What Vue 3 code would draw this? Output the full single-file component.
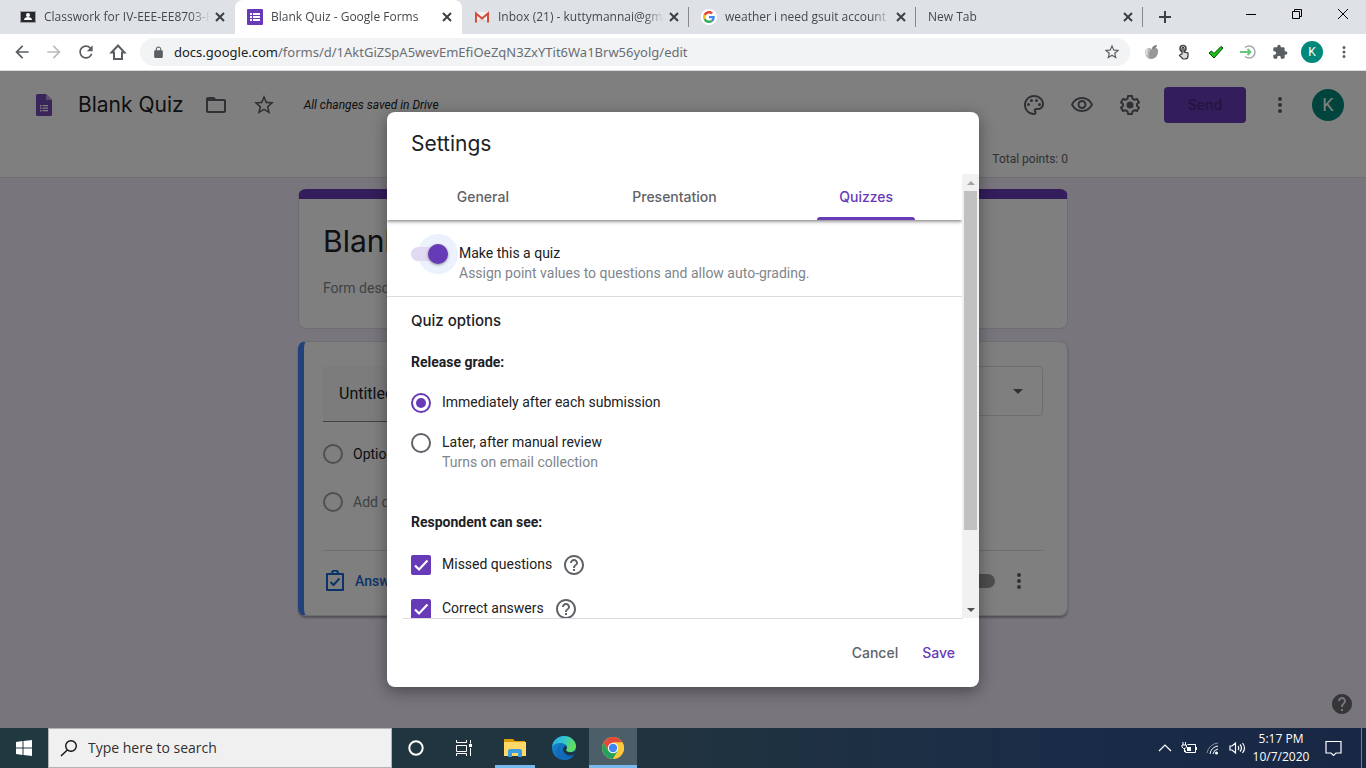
<script setup>
import { h, ref } from 'vue'

const paths = {
  back: 'M20 11H7.83l5.59-5.59L12 4l-8 8 8 8 1.41-1.41L7.83 13H20v-2z',
  forward: 'M12 4l-1.41 1.41L16.17 11H4v2h12.17l-5.58 5.59L12 20l8-8z',
  reload: 'M17.65 6.35C16.2 4.9 14.21 4 12 4c-4.42 0-7.99 3.58-7.99 8s3.57 8 7.99 8c3.73 0 6.84-2.55 7.73-6h-2.08c-.82 2.33-3.04 4-5.65 4-3.31 0-6-2.69-6-6s2.69-6 6-6c1.66 0 3.14.69 4.22 1.78L13 11h7V4l-2.35 2.35z',
  lock: 'M18 8h-1V6c0-2.76-2.24-5-5-5S7 3.24 7 6v2H6c-1.1 0-2 .9-2 2v10c0 1.1.9 2 2 2h12c1.1 0 2-.9 2-2V10c0-1.1-.9-2-2-2zM9 6c0-1.71 1.39-3.1 3.1-3.1s3.1 1.39 3.1 3.1v2H9z',
  star: 'M22 9.24l-7.19-.62L12 2 9.19 8.63 2 9.24l5.46 4.73L5.82 21 12 17.27 18.18 21l-1.63-7.03L22 9.24zM12 15.4l-3.76 2.27 1-4.28-3.32-2.88 4.38-.38L12 6.1l1.71 4.04 4.38.38-3.32 2.88 1 4.28L12 15.4z',
  puzzle: 'M20.5 11H19V7c0-1.1-.9-2-2-2h-4V3.5C13 2.12 11.88 1 10.5 1S8 2.12 8 3.5V5H4c-1.1 0-1.99.9-1.99 2v3.8H3.5c1.49 0 2.7 1.21 2.7 2.7s-1.21 2.7-2.7 2.7H2V20c0 1.1.9 2 2 2h3.8v-1.5c0-1.49 1.21-2.7 2.7-2.7 1.49 0 2.7 1.21 2.7 2.7V22H17c1.1 0 2-.9 2-2v-4h1.5c1.38 0 2.5-1.12 2.5-2.5S21.88 11 20.5 11z',
  more: 'M12 8a2 2 0 1 0 0-4 2 2 0 0 0 0 4zm0 2a2 2 0 1 0 0 4 2 2 0 0 0 0-4zm0 6a2 2 0 1 0 0 4 2 2 0 0 0 0-4z',
  folder: 'M20 6h-8l-2-2H4c-1.1 0-1.99.9-1.99 2L2 18c0 1.1.9 2 2 2h16c1.1 0 2-.9 2-2V8c0-1.1-.9-2-2-2zm0 12H4V8h16v10z',
  palette: 'M12 22C6.49 22 2 17.51 2 12S6.49 2 12 2s10 4.04 10 9c0 3.31-2.69 6-6 6h-1.77c-.28 0-.5.22-.5.5 0 .12.05.23.13.33.41.47.64 1.06.64 1.67A2.5 2.5 0 0 1 12 22zm0-18c-4.41 0-8 3.59-8 8s3.59 8 8 8c.28 0 .5-.22.5-.5a.54.54 0 0 0-.14-.35c-.41-.46-.63-1.05-.63-1.65a2.5 2.5 0 0 1 2.5-2.5H16c2.21 0 4-1.79 4-4 0-3.86-3.59-7-8-7zM5 11.5a1.5 1.5 0 1 0 3 0 1.5 1.5 0 0 0-3 0zM8 7.5a1.5 1.5 0 1 0 3 0 1.5 1.5 0 0 0-3 0zM13 7.5a1.5 1.5 0 1 0 3 0 1.5 1.5 0 0 0-3 0zM16 11.5a1.5 1.5 0 1 0 3 0 1.5 1.5 0 0 0-3 0z',
  eye: 'M12 6c3.79 0 7.17 2.13 8.82 5.5C19.17 14.87 15.79 17 12 17s-7.17-2.13-8.82-5.5C4.83 8.13 8.21 6 12 6m0-2C7 4 2.73 7.11 1 11.5 2.73 15.89 7 19 12 19s9.27-3.11 11-7.5C21.27 7.11 17 4 12 4zm0 5c1.38 0 2.5 1.12 2.5 2.5S13.38 14 12 14s-2.5-1.12-2.5-2.5S10.62 9 12 9m0-2c-2.48 0-4.5 2.02-4.5 4.5S9.52 16 12 16s4.5-2.02 4.5-4.5S14.48 7 12 7z',
  help: 'M11 18h2v-2h-2v2zm1-16C6.48 2 2 6.48 2 12s4.48 10 10 10 10-4.48 10-10S17.52 2 12 2zm0 18c-4.41 0-8-3.59-8-8s3.59-8 8-8 8 3.59 8 8-3.59 8-8 8zm0-14c-2.21 0-4 1.79-4 4h2c0-1.1.9-2 2-2s2 .9 2 2c0 2-3 1.75-3 5h2c0-2.25 3-2.5 3-5 0-2.21-1.79-4-4-4z',
  helpFilled: 'M12 2C6.48 2 2 6.48 2 12s4.48 10 10 10 10-4.48 10-10S17.52 2 12 2zm1 17h-2v-2h2v2zm2.07-7.75l-.9.92C13.45 12.9 13 13.5 13 15h-2v-.5c0-1.1.45-2.1 1.17-2.83l1.24-1.26c.37-.36.59-.86.59-1.41 0-1.1-.9-2-2-2s-2 .9-2 2H8c0-2.21 1.79-4 4-4s4 1.79 4 4c0 .88-.36 1.68-.93 2.25z'
}

const Icon = (props) =>
  h('svg', { viewBox: '0 0 24 24', width: props.size || 24, height: props.size || 24, fill: 'currentColor', 'aria-hidden': 'true' }, [
    h('path', { d: paths[props.name] })
  ])
Icon.props = ['name', 'size']

const tabs = [
  { icon: 'classroom', title: 'Classwork for IV-EEE-EE8703-R' },
  { icon: 'forms', title: 'Blank Quiz - Google Forms', active: true },
  { icon: 'gmail', title: 'Inbox (21) - kuttymannai@gma' },
  { icon: 'google', title: 'weather i need gsuit account fo' },
  { icon: '', title: 'New Tab' }
]

const sections = ['General', 'Presentation', 'Quizzes']
const section = ref('Quizzes')
const isQuiz = ref(true)
const release = ref('now')
const visible = ref([
  { id: 'missed', label: 'Missed questions', on: true },
  { id: 'correct', label: 'Correct answers', on: true }
])
const formTitle = ref('Blank Quiz')
const question = ref('Untitled Question')
</script>

<template>
  <div class="screen">
    <header class="tabstrip">
      <nav class="tabs">
        <div v-for="t in tabs" :key="t.title" class="tab" :class="{ active: t.active }">
          <svg v-if="t.icon === 'classroom'" width="16" height="16" viewBox="0 0 16 16">
            <path d="M0 2h16v12H0z" fill="#9aa0a6" /><path d="M1 3h14v10H1z" fill="#27292d" />
            <circle cx="8" cy="6" r="2" fill="#fff" /><path d="M4 11c0-2 2-3 4-3s4 1 4 3z" fill="#fff" />
          </svg>
          <svg v-else-if="t.icon === 'forms'" width="16" height="16" viewBox="0 0 16 16">
            <rect width="16" height="16" rx="1" fill="#673ab7" />
            <path d="M3 4h2v2H3zM3 7h2v2H3zM3 10h2v2H3zM6 4h7v2H6zM6 7h7v2H6zM6 10h7v2H6z" fill="#fff" />
          </svg>
          <svg v-else-if="t.icon === 'gmail'" width="16" height="16" viewBox="0 0 16 16">
            <path d="M2 3h12v10H2z" fill="#f2f2f2" /><path d="M2 13l6-5 6 5z" fill="#dcdcdc" />
            <path d="M2 13.500V4.500l6 5 6-5v9" fill="none" stroke="#d54b3d" stroke-width="2" />
          </svg>
          <svg v-else-if="t.icon === 'google'" width="16" height="16" viewBox="0 0 16 16">
            <circle cx="8" cy="8" r="8" fill="#fff" />
            <g transform="translate(2 2) scale(.25)">
              <path fill="#EA4335" d="M24 9.5c3.54 0 6.71 1.22 9.21 3.6l6.85-6.85C35.9 2.38 30.47 0 24 0 14.62 0 6.51 5.38 2.56 13.22l7.98 6.19C12.43 13.72 17.74 9.5 24 9.5z" />
              <path fill="#4285F4" d="M46.98 24.55c0-1.57-.15-3.09-.38-4.55H24v9.02h12.94c-.58 2.96-2.26 5.48-4.78 7.18l7.73 6c4.51-4.18 7.09-10.36 7.09-17.65z" />
              <path fill="#FBBC05" d="M10.53 28.59c-.48-1.45-.76-2.99-.76-4.59s.27-3.14.76-4.59l-7.98-6.19C.92 16.46 0 20.12 0 24c0 3.88.92 7.54 2.56 10.78l7.97-6.19z" />
              <path fill="#34A853" d="M24 48c6.48 0 11.93-2.13 15.89-5.81l-7.73-6c-2.15 1.45-4.92 2.3-8.16 2.3-6.26 0-11.57-4.22-13.47-9.91l-7.98 6.19C6.51 42.62 14.62 48 24 48z" />
            </g>
          </svg>
          <span class="tab-title">{{ t.title }}</span>
          <button class="icon-btn tab-close" aria-label="Close tab">
            <svg width="10" height="10" viewBox="0 0 10 10"><path d="M1 1l8 8M9 1L1 9" stroke="#3c4043" stroke-width="2" /></svg>
          </button>
        </div>
      </nav>
      <button class="icon-btn new-tab" aria-label="New tab">
        <svg width="14" height="14" viewBox="0 0 14 14"><path d="M7 1v12M1 7h12" stroke="#3c4043" stroke-width="2" /></svg>
      </button>
      <div class="window-controls">
        <button class="icon-btn" aria-label="Minimize"><svg width="12" height="12" viewBox="0 0 12 12"><path d="M1 6.5h10" stroke="#000" /></svg></button>
        <button class="icon-btn" aria-label="Restore"><svg width="12" height="12" viewBox="0 0 12 12"><path d="M1.500 3.500h7v7h-7zM3.500 3.500v-2h7v7h-2" fill="none" stroke="#000" /></svg></button>
        <button class="icon-btn" aria-label="Close"><svg width="12" height="12" viewBox="0 0 12 12"><path d="M1 1l10 10M11 1L1 11" stroke="#000" /></svg></button>
      </div>
    </header>

    <div class="toolbar">
      <button class="icon-btn tool" aria-label="Back"><Icon name="back" :size="20" /></button>
      <button class="icon-btn tool faded" aria-label="Forward"><Icon name="forward" :size="20" /></button>
      <button class="icon-btn tool" aria-label="Reload"><Icon name="reload" :size="20" /></button>
      <button class="icon-btn tool" aria-label="Home">
        <svg width="18" height="18" viewBox="0 0 18 18"><path d="M2.500 9.500L9 2.500l6.500 7H13V16H5V9.500z" fill="none" stroke="currentColor" stroke-width="2" /></svg>
      </button>
      <div class="omnibox">
        <Icon name="lock" :size="13" />
        <div class="url" role="textbox" aria-label="Address"><span class="host">docs.google.com</span>/forms/d/1AktGiZSpA5wevEmEfiOeZqN3ZxYTit6Wa1Brw56yolg/edit</div>
        <button class="icon-btn" aria-label="Bookmark this page"><Icon name="star" :size="18" /></button>
      </div>
      <div class="extensions">
        <button class="icon-btn tool" aria-label="Apple extension">
          <svg width="16" height="16" viewBox="0 0 16 16"><path d="M8 5C5 3 1 4 1 8c0 4 3 7 5 7 5 0 8-3 8-8 0-3-3-4-6-2z" fill="#b4b4b4" /><path d="M8 5C6 6 4 9 6 15c5 0 8-3 8-8 0-3-3-4-6-2z" fill="#989898" /><path d="M8 5c0-3 3-4 5-4 0 2-2 4-5 4z" fill="#808080" /><path d="M4 5c-2 1-2 4-1 6" stroke="#e0e0e0" fill="none" stroke-width="2" /></svg>
        </button>
        <button class="icon-btn tool" aria-label="Tap extension">
          <svg width="16" height="16" viewBox="0 0 16 16"><circle cx="7" cy="4.500" r="3" fill="none" stroke="#444" stroke-width="1.500" /><path d="M6 10V4.500c0-1.500 2-1.500 2 0V8l4 1v3c0 2-1 3-3 3H7L3.500 11.500l1-1z" fill="#ddd" stroke="#333" stroke-width="1.200" /></svg>
        </button>
        <button class="icon-btn tool" aria-label="Check extension">
          <svg width="16" height="16" viewBox="0 0 16 16"><path d="M1 9l2.500-2L6 9.500 13 2.500l2 1.500-9 10z" fill="#15c815" stroke="#063d06" /></svg>
        </button>
        <button class="icon-btn tool" aria-label="Sign-in extension">
          <svg width="16" height="16" viewBox="0 0 16 16" fill="none"><path d="M5 3.500a6 6 0 1 1 0 9" stroke="#a5a9ad" stroke-width="1.500" /><path d="M0 8h10M7.500 5l3 3-3 3" stroke="#69c57c" stroke-width="1.800" /></svg>
        </button>
        <button class="icon-btn tool" aria-label="Extensions"><Icon name="puzzle" :size="16" /></button>
        <button class="icon-btn tool" aria-label="Profile"><span class="avatar small">K</span></button>
        <button class="icon-btn tool" aria-label="Chrome menu"><Icon name="more" :size="18" /></button>
      </div>
    </div>

    <main class="page">
      <div class="app-header">
        <div class="header-row">
          <svg width="16" height="22" viewBox="0 0 16 22">
            <path d="M1.500 0H10l6 6v14.500a1.500 1.500 0 0 1-1.500 1.500h-13A1.500 1.500 0 0 1 0 20.500v-19A1.500 1.500 0 0 1 1.500 0z" fill="#7248b9" /><path d="M10 0l6 6h-6z" fill="#b39ddb" />
            <path d="M4 11h1.500v1.500H4zM4 13.500h1.500V15H4zM4 16h1.500v1.500H4zM6.500 11H12v1.200H6.500zM6.500 13.500H12v1.200H6.500zM6.500 16H12v1.200H6.500z" fill="#fff" />
          </svg>
          <h1 class="doc-title">Blank Quiz</h1>
          <button class="icon-btn header-icon" aria-label="Move to folder"><Icon name="folder" /></button>
          <button class="icon-btn header-icon" aria-label="Star"><Icon name="star" /></button>
          <span class="saved">All changes saved in Drive</span>
          <div class="header-actions">
            <button class="icon-btn header-icon" aria-label="Customize theme"><Icon name="palette" /></button>
            <button class="icon-btn header-icon" aria-label="Preview"><Icon name="eye" /></button>
            <button class="icon-btn header-icon" aria-label="Settings">
              <svg width="24" height="24" viewBox="0 0 24 24">
                <path d="M10 3h4l.5 2.700 2 1.100L19 6l2 3.400-2 1.700v1.800l2 1.700-2 3.400-2.500-.8-2 1.100L14 21h-4l-.5-2.700-2-1.100L5 18l-2-3.400 2-1.700v-1.800L3 9.400 5 6l2.500.8 2-1.100z" fill="none" stroke="currentColor" stroke-width="2" stroke-linejoin="round" /><circle cx="12" cy="12" r="3.500" fill="currentColor" />
              </svg>
            </button>
            <button class="send">Send</button>
            <button class="icon-btn header-icon narrow" aria-label="More"><Icon name="more" /></button>
            <button class="icon-btn" aria-label="Account"><span class="avatar">K</span></button>
          </div>
        </div>
        <div class="column points">Total points: 0</div>
      </div>

      <div class="column cards">
        <section class="card title-card">
          <input v-model="formTitle" class="form-title" aria-label="Form title" />
          <input class="form-desc" placeholder="Form description" aria-label="Form description" />
        </section>
        <section class="card question-card">
          <div class="question-top">
            <input v-model="question" class="question-input" aria-label="Question" />
            <button class="type-picker" aria-label="Question type"><span class="caret"></span></button>
          </div>
          <div class="option"><span class="ring"></span><span>Option 1</span></div>
          <div class="option muted"><span class="ring"></span><span>Add option</span></div>
          <div class="question-foot">
            <button class="answer-key">
              <svg width="20" height="22" viewBox="0 0 20 22" fill="none" stroke="currentColor" stroke-width="2"><path d="M2 4h16v16H2z" stroke-linejoin="round" /><path d="M5.500 12l3 3 6-6.500" /><path d="M7 3.500a3 3 0 0 1 6 0" /></svg>
              Answer key
            </button>
            <div class="foot-right">
              <span class="off-switch"></span>
              <button class="icon-btn" aria-label="More options"><Icon name="more" /></button>
            </div>
          </div>
        </section>
      </div>

      <div class="scrim"></div>
      <button class="icon-btn help-fab" aria-label="Help"><Icon name="helpFilled" /></button>

      <div class="dialog-layer">
        <div class="dialog" role="dialog" aria-labelledby="dlg-title">
          <h2 id="dlg-title" class="dialog-title">Settings</h2>
          <div class="dialog-main">
            <div class="dialog-body">
              <div class="section-tabs" role="tablist">
                <button v-for="s in sections" :key="s" class="section-tab" :class="{ current: section === s }" role="tab" :aria-selected="section === s" @click="section = s">{{ s }}</button>
              </div>
              <div class="quiz-row">
                <input id="is-quiz" v-model="isQuiz" class="switch" type="checkbox" />
                <label for="is-quiz">Make this a quiz<small>Assign point values to questions and allow auto-grading.</small></label>
              </div>
              <div class="options">
                <h3 class="options-title">Quiz options</h3>
                <h4 class="group-title">Release grade:</h4>
                <div class="choice">
                  <input id="rel-now" v-model="release" class="radio" type="radio" value="now" name="release" />
                  <label for="rel-now">Immediately after each submission</label>
                </div>
                <div class="choice">
                  <input id="rel-later" v-model="release" class="radio" type="radio" value="later" name="release" />
                  <label for="rel-later">Later, after manual review<small>Turns on email collection</small></label>
                </div>
                <h4 class="group-title respondent">Respondent can see:</h4>
                <div v-for="v in visible" :key="v.id" class="choice check-choice">
                  <span class="check-wrap">
                    <input :id="v.id" v-model="v.on" class="check" type="checkbox" />
                    <svg v-if="v.on" width="20" height="20" viewBox="0 0 20 20"><path d="M4 10.500l4 4 8.500-9" fill="none" stroke="#fff" stroke-width="2.200" /></svg>
                  </span>
                  <label :for="v.id">{{ v.label }}</label>
                  <button class="icon-btn help" :aria-label="'About ' + v.label"><Icon name="help" /></button>
                </div>
              </div>
            </div>
            <div class="scrollbar" aria-hidden="true">
              <span class="arrow up"></span>
              <span class="thumb"></span>
              <span class="arrow down"></span>
            </div>
          </div>
          <div class="dialog-foot">
            <button class="text-btn">Cancel</button>
            <button class="text-btn primary">Save</button>
          </div>
        </div>
      </div>
    </main>

    <footer class="taskbar">
      <button class="icon-btn start" aria-label="Start">
        <svg width="16" height="16" viewBox="0 0 16 16" fill="#fff"><path d="M0 2l6.500-1v6.500H0zM7.500.9L16 0v7.500H7.500zM0 8.500h6.500V15L0 14zM7.500 8.500H16V16l-8.500-.9z" /></svg>
      </button>
      <label class="search">
        <svg width="18" height="18" viewBox="0 0 18 18" fill="none" stroke="#111" stroke-width="1.400"><circle cx="11" cy="7" r="5.300" /><path d="M7.300 11L1 17" /></svg>
        <input placeholder="Type here to search" aria-label="Search" />
      </label>
      <button class="icon-btn app" aria-label="Cortana"><svg width="16" height="16" viewBox="0 0 16 16"><circle cx="8" cy="8" r="6.700" fill="none" stroke="#fff" stroke-width="2" /></svg></button>
      <button class="icon-btn app" aria-label="Task view">
        <svg width="18" height="16" viewBox="0 0 18 16" fill="none" stroke="#fff"><path d="M1.500 0v2.500h10V0M1.500 5.500h10v6h-10zM1.500 16v-2.500h10V16M15.500 0v3.500M15.500 8v8" /><path d="M14 4h3v3h-3z" fill="#fff" stroke="none" /></svg>
      </button>
      <button class="icon-btn app running" aria-label="File Explorer">
        <svg width="22" height="18" viewBox="0 0 22 18"><path d="M0 0h9l2 2h10v5H0z" fill="#dd9d08" /><path d="M0 3h22v14H0z" fill="#ffd868" /><path d="M4 18v-6c0-1 1-2 2-2h10c1 0 2 1 2 2v6h-4v-4H8v4z" fill="#3d9be0" /></svg>
      </button>
      <button class="icon-btn app" aria-label="Edge">
        <svg width="24" height="24" viewBox="0 0 24 24">
          <defs>
            <linearGradient id="edge-top" x1="0" y1="0" x2="1" y2=".4"><stop offset="0" stop-color="#2ba6e4" /><stop offset=".5" stop-color="#33c5d0" /><stop offset="1" stop-color="#63df5c" /></linearGradient>
            <linearGradient id="edge-low" x1="0" y1="0" x2="1" y2="1"><stop offset="0" stop-color="#168bd5" /><stop offset="1" stop-color="#0c56a5" /></linearGradient>
          </defs>
          <circle cx="12" cy="12" r="12" fill="url(#edge-low)" />
          <path d="M0 11C1 4 6 0 12 0c7 0 12 5 12 10 0 4-3 6-6 6-3 0-4-1-4-2 0-1 1-1 1-3 0-2-3-4-7-4-4 0-7 2-8 4z" fill="url(#edge-top)" />
          <path d="M9 9c-3 4-1 10 4 12 4 1 7 0 9-3-1 4-5 6-10 6-5-1-8-5-7-9 0-3 2-5 4-6z" fill="#1269b8" />
          <path d="M14 14c1 3 5 3 10 1-1 2-2 3-3 4-5 1-9-1-10-5 0-2 1-4 3-4 1 1 1 2 0 4z" fill="#20323d" />
        </svg>
      </button>
      <button class="icon-btn app current" aria-label="Chrome">
        <svg width="22" height="22" viewBox="0 0 22 22">
          <circle cx="11" cy="11" r="11" fill="#fbc93b" /><path d="M1.500 5.500A11 11 0 0 1 20.500 5.500H11l-4.800 8.200z" fill="#e24a3b" /><path d="M1.500 5.500A11 11 0 0 0 11 22l4.800-8.300H6.200z" fill="#24a15c" /><path d="M20.500 5.500H11l5 8.200L11 22A11 11 0 0 0 20.500 5.500z" fill="#fbc93b" />
          <circle cx="11" cy="11" r="5.200" fill="#fff" /><circle cx="11" cy="11" r="4.200" fill="#4285f4" />
        </svg>
      </button>
      <div class="tray">
        <button class="icon-btn tray-icon" aria-label="Show hidden icons"><svg width="14" height="14" viewBox="0 0 14 14"><path d="M1 10l6-6 6 6" fill="none" stroke="#fff" stroke-width="1.200" /></svg></button>
        <button class="icon-btn tray-icon" aria-label="Battery">
          <svg width="17" height="14" viewBox="0 0 17 14"><path d="M6.500 3.500h8v8h-10v-2M15.500 6v3M2 1v3M4.500 1v3M1 4h4.500v2L4 7.500H2.500L1 6zM3.500 8v3" fill="none" stroke="#fff" /><path d="M6 6h4v4H6z" fill="#fff" /></svg>
        </button>
        <button class="icon-btn tray-icon" aria-label="Wi-Fi">
          <svg width="14" height="14" viewBox="0 0 14 14" fill="none"><path d="M1 12A12 12 0 0 1 12 2" stroke="#8292a0" /><path d="M4 13a9 9 0 0 1 8-8M7 13a6 6 0 0 1 5-5" stroke="#fff" /><circle cx="10.500" cy="12" r="1.500" fill="#fff" /></svg>
        </button>
        <button class="icon-btn tray-icon" aria-label="Volume">
          <svg width="17" height="14" viewBox="0 0 17 14" fill="none" stroke="#fff" stroke-width="1.200"><path d="M1 5h2l3.500-3v10L3 9H1zM9 5q1.500 2 0 4M11 3.500q3 3.500 0 7M13.500 2q4 5 0 10" /></svg>
        </button>
        <div class="clock"><span>5:17 PM</span><span>10/7/2020</span></div>
        <button class="icon-btn notify" aria-label="Notifications">
          <svg width="17" height="17" viewBox="0 0 17 17"><path d="M1 1.500h15v11.500h-5L8.500 15.500 6 13H1z" fill="none" stroke="#fff" stroke-width="1.200" /></svg>
        </button>
        <span class="desktop-edge"></span>
      </div>
    </footer>
  </div>
</template>

<style>
html, body { margin: 0; }
</style>

<style scoped>
.screen { display: flex; flex-direction: column; height: 100vh; overflow: hidden; font-family: Roboto, "Liberation Sans", sans-serif; font-size: 14px; line-height: 20px; color: #202124; }
.screen * { box-sizing: border-box; }
button, input { font: inherit; color: inherit; }
button { border: 0; background: none; padding: 0; cursor: pointer; }
input { outline: 0; border: 0; background: none; padding: 0; margin: 0; min-width: 0; }
svg { display: block; flex: none; }
h1, h2, h3, h4 { margin: 0; font-weight: 400; }
.icon-btn { display: flex; align-items: center; justify-content: center; flex: none; }

.tabstrip { display: flex; height: 34px; flex: none; background: #dee1e6; padding-left: 8px; font-family: "Open Sans", "Noto Sans", sans-serif; font-size: 12px; }
.tabs { display: flex; flex: 0 1 1135px; min-width: 0; }
.tab { display: flex; align-items: center; flex: 1; min-width: 0; gap: 8px; padding: 0 7px 0 12px; color: #45494d; position: relative; }
.tab:nth-child(n + 3)::after { content: ""; position: absolute; right: 0; top: 7px; height: 20px; width: 1px; background: #85888d; }
.tab.active { background: #fff; border-radius: 8px 8px 0 0; }
.tab-title { flex: 1; min-width: 0; overflow: hidden; white-space: nowrap; mask-image: linear-gradient(to right, #000 calc(100% - 20px), transparent); }
.tab-close { width: 16px; height: 16px; margin-left: -6px; }
.new-tab { width: 44px; }
.window-controls { display: flex; margin-left: auto; height: 28px; }
.window-controls .icon-btn { width: 46px; }

.toolbar { display: flex; align-items: center; height: 37px; flex: none; background: #fff; border-bottom: 1px solid #d7dade; padding: 0 6px; color: #5a5e63; }
.tool { width: 32px; height: 32px; }
.faded { color: #babcbe; }
.omnibox { flex: 1; display: flex; align-items: center; gap: 9px; height: 28px; margin-left: 6px; padding: 0 9px 0 12px; border-radius: 14px; background: #f1f3f4; min-width: 0; }
.url { flex: 1; min-width: 0; overflow: hidden; white-space: nowrap; font-family: "Noto Sans", "Open Sans", sans-serif; font-size: 13px; color: #6a6e73; }
.host { color: #202124; }
.extensions { display: flex; margin-left: 6px; }
.avatar { display: flex; align-items: center; justify-content: center; width: 32px; height: 32px; border-radius: 50%; background: #00897b; color: #fff; font-size: 18px; }
.avatar.small { width: 22px; height: 22px; font-size: 12px; }

.page { position: relative; flex: 1; min-height: 0; overflow: hidden; background: #f0ebf8; }
.app-header { height: 107px; background: #fff; border-bottom: 1px solid #dadce0; color: #5f6368; }
.header-row { display: flex; align-items: center; height: 68px; padding: 0 22px 0 36px; }
.doc-title { margin: 0 8px 0 26px; font-family: Inter, Roboto, sans-serif; font-size: 21px; line-height: 28px; color: #202124; }
.header-icon { width: 48px; height: 48px; }
.header-icon.narrow { width: 36px; margin: 0 14px 0 16px; }
.saved { margin-left: 16px; font-size: 12px; font-style: italic; color: #202124; }
.header-actions { display: flex; align-items: center; margin-left: auto; }
.send { width: 82px; height: 36px; margin-left: 10px; border-radius: 4px; background: #673ab7; color: #46277f; font-family: Inter, Roboto, sans-serif; font-weight: 500; }
.column { width: 770px; max-width: 100%; margin: 0 auto; }
.points { text-align: right; font-size: 12px; line-height: 40px; }

.cards { padding-top: 11px; display: flex; flex-direction: column; gap: 12px; }
.card { background: #fff; border: 1px solid #dadce0; border-radius: 8px; display: flex; flex-direction: column; }
.title-card { border-top: 10px solid #673ab7; padding: 20px 24px; height: 140px; }
.form-title { font-family: Inter, Roboto, sans-serif; font-size: 30px; line-height: 44px; height: 44px; }
.form-desc { margin-top: 15px; height: 20px; }
.form-desc::placeholder { color: #80868b; opacity: 1; }
.question-card { height: 275px; padding: 24px 24px 0 19px; border-left: 6px solid #4285f4; box-shadow: 0 2px 2px rgba(0, 0, 0, .3); }
.question-top { display: flex; align-items: flex-start; justify-content: space-between; height: 56px; }
.question-input { width: 440px; height: 56px; padding: 0 16px; background: #f8f9fa; border-bottom: 1px solid #80868b; font-size: 16px; }
.type-picker { display: flex; align-items: center; justify-content: flex-end; width: 240px; height: 50px; padding: 0 19px; border: 1px solid #dadce0; border-radius: 4px; }
.caret { border: 5px solid transparent; border-top-color: #5f6368; border-bottom: 0; }
.option { display: flex; align-items: center; gap: 10px; height: 48px; }
.question-top + .option { margin-top: 8px; }
.option.muted { color: #80868b; }
.ring { width: 20px; height: 20px; border: 2px solid #9aa0a6; border-radius: 50%; }
.question-foot { display: flex; align-items: center; justify-content: space-between; margin-top: 24px; height: 60px; border-top: 1px solid #dadce0; }
.answer-key { display: flex; align-items: center; gap: 10px; padding-left: 2px; font-weight: 500; color: #1967d2; }
.foot-right { display: flex; align-items: center; gap: 12px; padding-right: 12px; color: #5f6368; }
.off-switch { width: 36px; height: 14px; border-radius: 7px; background: #9a9a9a; }

.scrim { position: absolute; inset: 0; background: rgba(0, 0, 0, .5); }
.help-fab { position: absolute; right: 12px; bottom: 12px; color: #363638; }
.dialog-layer { position: absolute; inset: 0; display: flex; align-items: center; justify-content: center; }
.dialog { width: 592px; max-width: 100%; background: #fff; border-radius: 8px; overflow: hidden; box-shadow: 0 4px 16px rgba(0, 0, 0, .4); }
.dialog-title { padding: 18px 24px 16px; font-family: Inter, Roboto, sans-serif; font-size: 21px; line-height: 28px; }
.dialog-main { display: flex; height: 444px; }
.dialog-body { flex: 1; min-width: 0; overflow: hidden; }
.section-tabs { display: flex; height: 46px; box-shadow: 0 1px 4px rgba(0, 0, 0, .6); clip-path: inset(0 0 -8px 0); }
.section-tab { position: relative; flex: 1; font-family: Inter, Roboto, sans-serif; font-size: 14px; font-weight: 500; color: #5f6368; }
.section-tab.current { color: #673ab7; }
.section-tab.current::after { content: ""; position: absolute; left: 47px; right: 47px; bottom: 0; height: 3px; border-radius: 3px 3px 0 0; background: #673ab7; }
.quiz-row { position: relative; z-index: 0; display: flex; align-items: flex-start; gap: 11px; padding: 23px 24px 13px; border-bottom: 1px solid #dadce0; }
small { display: block; font-size: 14px; color: #80868b; }
.switch { appearance: none; position: relative; flex: none; width: 37px; height: 14px; margin-top: 4px; border-radius: 7px; background: #e1d8f1; }
.switch::before { content: ""; position: absolute; z-index: -1; left: 7px; top: -13px; width: 40px; height: 40px; border-radius: 50%; background: #ebf2fd; }
.switch::after { content: ""; position: absolute; left: 17px; top: -3px; width: 20px; height: 20px; border-radius: 50%; background: #673ab7; box-shadow: 0 1px 3px rgba(0, 0, 0, .4); }
.options { padding: 14px 24px 0; }
.options-title { font-family: Inter, Roboto, sans-serif; font-size: 15px; font-weight: 500; }
.group-title { margin-top: 21px; font-weight: 700; }
.group-title.respondent { margin-top: 40px; }
.choice { display: flex; align-items: flex-start; gap: 11px; margin-top: 20px; }
.radio { appearance: none; flex: none; display: grid; place-items: center; width: 20px; height: 20px; margin: 1px 0 -1px; border: 2px solid #5f6368; border-radius: 50%; }
.radio:checked { border-color: #673ab7; }
.radio:checked::after { content: ""; width: 10px; height: 10px; border-radius: 50%; background: #673ab7; }
.check-choice { height: 20px; margin-top: 24px; }
.respondent + .check-choice { margin-top: 22px; }
.check-wrap { display: grid; margin-top: 1px; }
.check-wrap > * { grid-area: 1 / 1; }
.check-wrap svg { pointer-events: none; }
.check { appearance: none; width: 20px; height: 20px; border: 2px solid #673ab7; border-radius: 2px; }
.check:checked { background: #673ab7; }
.help { height: 22px; margin-left: -1px; color: #5f6368; }
.scrollbar { display: flex; flex-direction: column; flex: none; width: 17px; background: #f1f1f1; }
.arrow { display: grid; place-items: center; height: 17px; }
.arrow::after { content: ""; border: 4px solid transparent; }
.arrow.up::after { border-bottom-color: #a3a3a3; border-top: 0; }
.arrow.down { margin-top: auto; }
.arrow.down::after { border-top-color: #505050; border-bottom: 0; }
.thumb { height: 339px; margin: 0 2px; background: #c1c1c1; }
.dialog-foot { display: flex; align-items: center; justify-content: flex-end; gap: 24px; height: 69px; margin: 0 16px; padding: 0 8px; border-top: 1px solid #dadce0; }
.text-btn { font-family: Inter, Roboto, sans-serif; font-weight: 500; color: #5f6368; }
.text-btn.primary { color: #673ab7; }

.taskbar { display: flex; height: 40px; flex: none; background: linear-gradient(to right, #203940, #20333f 50%, #192b48 80%, #182744); color: #fff; font-family: "Open Sans", "Noto Sans", sans-serif; }
.start { width: 48px; }
.search { display: flex; align-items: center; gap: 10px; width: 344px; padding: 0 11px; border: 1px solid #b0b4b6; background: #f0f0f0; }
.search input { flex: 1; color: #222; }
.search input::placeholder { color: #303030; opacity: 1; }
.app { width: 48px; border-bottom: 3px solid transparent; border-top: 3px solid transparent; }
.app.running { border-bottom-color: #76b9ed; width: 40px; margin: 0 5px 0 7px; }
.app.current { margin-left: 1px; border: 0; border-top: 3px solid #4c5e67; border-bottom: 3px solid #76b9ed; background: #4c5e67; }
.tray { display: flex; align-items: stretch; margin-left: auto; }
.tray-icon { width: 24px; }
.clock { display: flex; flex-direction: column; justify-content: center; align-items: center; width: 64px; font-size: 12px; line-height: 18px; }
.notify { width: 40px; }
.desktop-edge { width: 5px; margin-left: 8px; border-left: 1px solid #71809a; }
</style>
